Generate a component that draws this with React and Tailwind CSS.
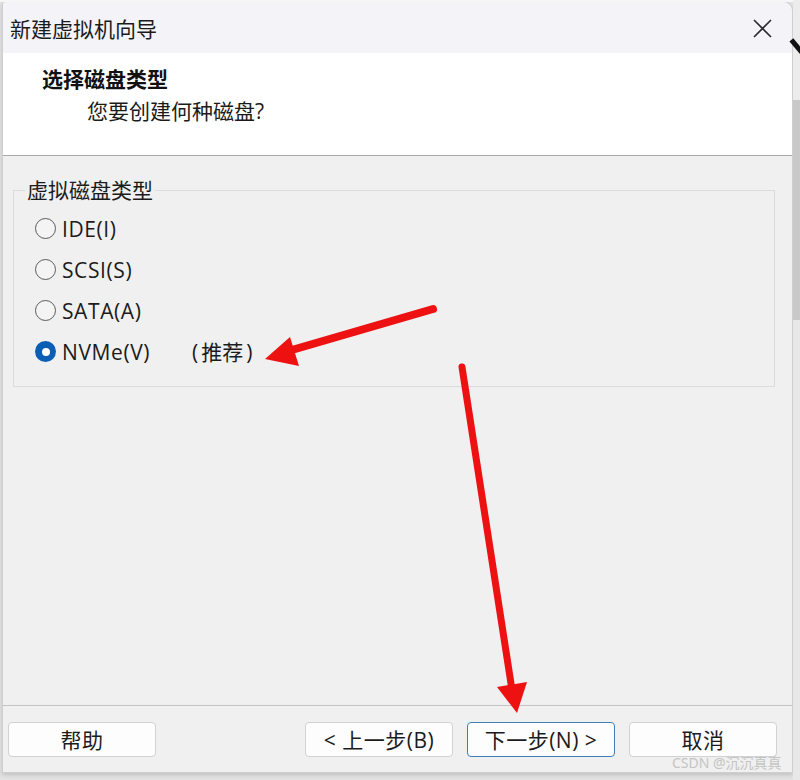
import React from "react";

function Radio({ checked, label, extra }) {
  return (
    <div className="flex items-center h-[41px] pl-[21px]">
      {checked ? (
        <span className="w-[21px] h-[21px] rounded-full bg-[#0a5fb4] flex items-center justify-center">
          <span className="w-[8px] h-[8px] rounded-full bg-white" />
        </span>
      ) : (
        <span className="w-[21px] h-[21px] rounded-full border border-[#5a5a5a] bg-[#f4f4f4]" />
      )}
      <span className={"ml-[6px] text-[21px] leading-[28px] tracking-[0.6px] text-[#1b1b1b] " + (extra ? "w-[130px]" : "")}>{label}</span>
      {extra && (
        <span className="text-[21px] leading-[28px] text-[#1b1b1b]">
          <span className="mr-[3px]">(</span>推荐<span className="ml-[3px]">)</span>
        </span>
      )}
    </div>
  );
}

function Btn({ children, primary }) {
  return (
    <div
      className={
        "w-[148px] h-[35px] rounded-[4px] flex items-center justify-center text-[21px] leading-[28px] tracking-[0.5px] text-[#1b1b1b] bg-[#fdfdfd] " +
        (primary ? "border-[1.5px] border-[#3f7fb6]" : "border border-[#d2d2d2]")
      }
    >
      {children}
    </div>
  );
}

export default function App() {
  return (
    <div className="relative w-[800px] h-[780px] bg-[#e2e2e2] overflow-hidden font-['Open_Sans','Noto_Sans_CJK_SC',sans-serif]">
      <div className="absolute left-0 top-0 w-[800px] h-[2px] bg-[#f6f6f6]" />
      {/* right scrollbar strip */}
      <div className="absolute left-[793px] top-0 w-[7px] h-[780px] flex flex-col">
        <div className="h-[100px] bg-[#ececec]" />
        <div className="h-[220px] bg-[#c9c9c9]" />
        <div className="flex-1 bg-[#e8e8e8]" />
      </div>
      <div className="absolute left-[794px] top-[38px] w-[5px] h-[16px] bg-[#111] rotate-[-40deg]" />

      <div className="ml-[2px] mt-[1px] w-[791px] h-[772px] border border-[#cfcfcf] rounded-tr-[10px] rounded-tl-[4px] flex flex-col overflow-hidden bg-[#f0f0f0] shadow-[0_2px_4px_rgba(0,0,0,0.15)]">
        {/* title bar */}
        <div className="h-[51px] shrink-0 bg-[#f3f3f8] flex items-center pl-[7px] pr-[20px]">
          <span className="text-[21px] leading-[28px] text-[#1b1b1b] pt-[2px]">新建虚拟机向导</span>
          <div className="flex-1" />
          <svg width="19" height="19" viewBox="0 0 19 19" className="mt-[2px]">
            <path d="M1 1 L18 18 M18 1 L1 18" stroke="#2b2b2b" strokeWidth="1.6" />
          </svg>
        </div>
        {/* header */}
        <div className="h-[103px] shrink-0 bg-white border-b border-[#a9a9a9] pt-[12px]">
          <div className="pl-[39px] text-[21px] leading-[28px] font-bold text-[#111]">选择磁盘类型</div>
          <div className="pl-[84px] mt-[4px] text-[21px] leading-[28px] text-[#1b1b1b]">您要创建何种磁盘?</div>
        </div>
        {/* content */}
        <div className="h-[550px] shrink-0 bg-[#f0f0f0] border-b border-[#c4c4c4] pt-[20px]">
          <fieldset className="ml-[10px] w-[762px] border border-[#dcdcdc] pt-[4px] pb-[14px]">
            <legend className="ml-[11px] px-[2px] text-[21px] leading-[28px] text-[#1b1b1b]">虚拟磁盘类型</legend>
            <Radio label="IDE(I)" />
            <Radio label="SCSI(S)" />
            <Radio label="SATA(A)" />
            <Radio checked label="NVMe(V)" extra />
          </fieldset>
        </div>
        {/* footer */}
        <div className="flex-1 flex items-start pt-[16px] pl-[5px] pr-[15px] gap-[14px]">
          <Btn>帮助</Btn>
          <div className="flex-1" />
          <Btn>&lt; 上一步(B)</Btn>
          <Btn primary>下一步(N) &gt;</Btn>
          <Btn>取消</Btn>
        </div>
      </div>

      {/* watermark */}
      <div className="absolute left-[672px] top-[753px] text-[14px] leading-[20px] text-[#c4c4c4] font-['Noto_Sans','Noto_Sans_CJK_SC',sans-serif]">
        CSDN @沉沉真真
      </div>

      {/* red arrows */}
      <svg className="absolute left-0 top-0 pointer-events-none" width="800" height="780">
        <line x1="433" y1="309" x2="285" y2="352" stroke="#ee1111" strokeWidth="8" strokeLinecap="round" />
        <polygon points="265,359 290,337 299,366" fill="#ee1111" />
        <line x1="462" y1="367" x2="512" y2="690" stroke="#ee1111" strokeWidth="7" strokeLinecap="round" />
        <polygon points="517,713 497,687 527,682" fill="#ee1111" />
      </svg>
    </div>
  );
}
